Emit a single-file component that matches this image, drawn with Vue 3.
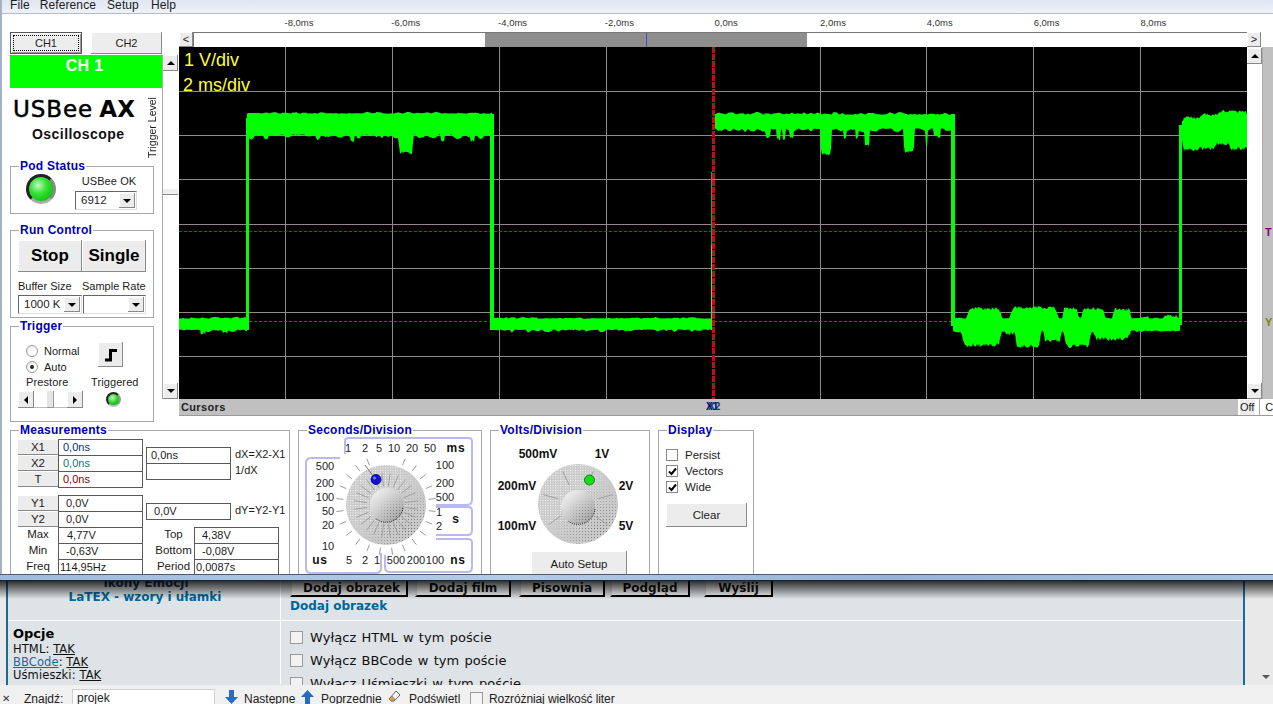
<script setup>
function rngFrom(seed) {
  let a = seed
  return () => {
    a = (a + 0x6d2b79f5) | 0
    let t = Math.imul(a ^ (a >>> 15), 1 | a)
    t = (t + Math.imul(t ^ (t >>> 7), 61 | t)) ^ t
    return ((t ^ (t >>> 14)) >>> 0) / 4294967296
  }
}
const rnd = rngFrom(6912)
function edge(n, amp, minW, maxW) {
  const out = []
  while (out.length < n) {
    const w = minW + Math.floor(rnd() * (maxW - minW + 1))
    const v = rnd() * amp
    for (let i = 0; i < w; i++) out.push(v * Math.sin((Math.PI * (i + 0.5)) / w) + rnd() * 0.9)
  }
  return out
}
const shape = (x, a, b) => Math.min(1, 3 * Math.sin((Math.PI * (x - a)) / (b - a)))
function band(x0, x1, top, bot, ampT, ampB, dips = [], rises = []) {
  const n = x1 - x0
  const t = edge(n + 1, ampT, 5, 13)
  const b = edge(n + 1, ampB, 5, 13)
  const up = []
  const dn = []
  for (let i = 0; i <= n; i++) {
    const x = x0 + i
    let ty = top - t[i]
    let by = bot + b[i]
    for (const d of dips) if (x >= d[0] && x <= d[1]) by = Math.max(by, bot + (d[2] - bot) * shape(x, d[0], d[1]) - rnd() * 4)
    for (const d of rises) if (x >= d[0] && x <= d[1]) ty = Math.min(ty, top - (top - d[2]) * shape(x, d[0], d[1]) + rnd() * 3)
    up.push(`${x},${ty.toFixed(1)}`)
    dn.unshift(`${x},${by.toFixed(1)}`)
  }
  return 'M' + up.join('L') + 'L' + dn.join('L') + 'Z'
}
const wave = [
  band(179, 247, 319, 329, 2.5, 3, [[200, 206, 336], [222, 229, 334]]),
  band(247, 492, 114, 134, 1.5, 6, [[398, 414, 155], [350, 355, 143], [440, 445, 143], [470, 475, 143]]),
  band(492, 711, 319, 329, 1.5, 3),
  band(715, 953, 115, 128, 2.5, 4,
    [[765, 771, 139], [776, 781, 140], [782, 786, 141], [789, 794, 139], [820, 832, 157], [843, 847, 139], [855, 859, 140], [864, 870, 147], [903, 915, 154], [925, 928, 149], [933, 941, 138]]),
  band(953, 1180, 319, 330, 1, 2,
    [[960, 1003, 347], [1004, 1016, 335], [1014, 1042, 348], [1043, 1062, 343], [1063, 1092, 348], [1092, 1132, 341]],
    [[966, 1003, 307], [1008, 1060, 306], [1062, 1079, 307], [1081, 1106, 307], [1112, 1132, 308], [1140, 1150, 316], [1163, 1178, 314]]),
  band(1182, 1247, 121, 139, 1.5, 2,
    [[1182, 1201, 152], [1196, 1216, 150], [1212, 1232, 146], [1228, 1249, 151]],
    [[1182, 1206, 116], [1198, 1226, 113], [1215, 1250, 110]])
]
const vGrid = [285, 392, 499, 606, 820, 926, 1033, 1140]
const hGrid = [91, 135, 179, 224, 268, 312, 356]
const timeLabels = ['-8,0ms', '-6,0ms', '-4,0ms', '-2,0ms', '0,0ns', '2,0ms', '4,0ms', '6,0ms', '8,0ms']

function ticks(cx, cy, angles, r1, r2) {
  return angles.map((a) => {
    const r = (a * Math.PI) / 180
    return {
      x1: cx + Math.sin(r) * r1,
      y1: cy - Math.cos(r) * r1,
      x2: cx + Math.sin(r) * r2,
      y2: cy - Math.cos(r) * r2
    }
  })
}
const secAngles = []
for (let a = -172.5; a < 180; a += 15) secAngles.push(a)
const secOuter = ticks(386, 505, secAngles.filter((a) => Math.abs(a) > 8), 43, 50)
const secInner = ticks(386, 505, secAngles, 19, 32)
const voltAngles = [-125, -75, -25, 25, 75, 125]
const voltInner = ticks(578, 504, voltAngles, 21, 36)
const secLabels = [
  ['1', 348, 452], ['2', 365, 452], ['5', 379, 452], ['10', 394, 452], ['20', 412, 452], ['50', 430, 452],
  ['100', 445, 469], ['200', 445, 487], ['500', 445, 501], ['1', 439, 516], ['2', 439, 530],
  ['500', 325, 470], ['200', 325, 487], ['100', 325, 501], ['50', 328, 515], ['20', 328, 529], ['10', 328, 550],
  ['5', 349, 564], ['2', 365, 564], ['1', 377, 564], ['500', 396, 564], ['200', 416, 564], ['100', 435, 564]
]
const voltLabels = [
  ['500mV', 538, 458], ['1V', 602, 458], ['200mV', 517, 490], ['2V', 626, 490], ['100mV', 517, 530], ['5V', 626, 530]
]
</script>

<template>
  <div class="screen">
    <div class="app">
      <nav class="menu">
        <span class="m-file">File</span><span class="m-ref">Reference</span><span class="m-setup">Setup</span><span class="m-help">Help</span>
      </nav>
      <div class="upper">
        <aside class="left">
          <div class="tabs">
            <button class="tab active"><span>CH1</span></button>
            <button class="tab">CH2</button>
          </div>
          <div class="banner">CH 1</div>
          <div class="brand">
            <div class="logo"><span class="logo-a">USBee</span> <span class="logo-b">AX</span></div>
            <div class="sub">Oscilloscope</div>
            <div class="trig-level">Trigger Level</div>
          </div>
          <fieldset class="group pod">
            <legend>Pod Status</legend>
            <div class="pod-in">
              <div class="led-big"></div>
              <div class="pod-right">
                <div class="lbl">USBee OK</div>
                <div class="select sel-pod"><span>6912</span><i class="drop"><b></b></i></div>
              </div>
            </div>
          </fieldset>
          <fieldset class="group run">
            <legend>Run Control</legend>
            <div class="run-btns"><button class="big">Stop</button><button class="big">Single</button></div>
            <div class="run-labels"><span>Buffer Size</span><span>Sample Rate</span></div>
            <div class="run-sels">
              <div class="select sel-a"><span>1000 K</span><i class="drop"><b></b></i></div>
              <div class="select sel-b"><span></span><i class="drop"><b></b></i></div>
            </div>
          </fieldset>
          <fieldset class="group trig">
            <legend>Trigger</legend>
            <div class="trig-top">
              <div class="radios">
                <label class="radio-row"><i class="radio"></i>Normal</label>
                <label class="radio-row"><i class="radio on"></i>Auto</label>
              </div>
              <button class="edge">
                <svg width="14" height="14" viewBox="0 0 14 14"><path d="M1 12H6.5V2.5H13" fill="none" stroke="#000" stroke-width="3" /></svg>
              </button>
            </div>
            <div class="trig-labels"><span>Prestore</span><span>Triggered</span></div>
            <div class="trig-bot">
              <div class="hscroll">
                <i class="sb-btn"><b class="arr-l"></b></i><i class="sb-track"></i><i class="sb-thumb"></i><i class="sb-track"></i><i class="sb-btn"><b class="arr-r"></b></i>
              </div>
              <div class="led-small"></div>
            </div>
          </fieldset>
        </aside>
        <div class="vslider">
          <i class="vbtn"><b class="arr-u"></b></i>
          <i class="vthumb"></i>
          <i class="vbtn vend"><b class="arr-d"></b></i>
        </div>
        <section class="scope">
          <div class="axis"><span v-for="t in timeLabels" :key="t">{{ t }}</span></div>
          <div class="hbar">
            <i class="hbtn">&lt;</i>
            <div class="htrack"><div class="hthumb"><i></i></div></div>
            <i class="hbtn">&gt;</i>
          </div>
          <div class="scope-row">
            <svg class="plot" width="1068" height="352" viewBox="179 47 1068 352">
              <rect x="179" y="47" width="1068" height="352" fill="#000" />
              <g stroke="#8c8c8c" stroke-width="1" shape-rendering="crispEdges">
                <line v-for="x in vGrid" :key="x" :x1="x + 0.5" :x2="x + 0.5" y1="47" y2="399" />
                <line v-for="y in hGrid" :key="y" x1="179" x2="1247" :y1="y + 0.5" :y2="y + 0.5" />
              </g>
              <line x1="179" x2="1247" y1="231.5" y2="231.5" stroke="#b02020" stroke-dasharray="3 2" shape-rendering="crispEdges" />
              <line x1="179" x2="1247" y1="321.5" y2="321.5" stroke="#1f7a1f" stroke-dasharray="3 2" shape-rendering="crispEdges" />
              <line x1="711.5" x2="711.5" y1="172" y2="245" stroke="#2f9f2f" shape-rendering="crispEdges" />
              <line x1="711.5" x2="711.5" y1="245" y2="330" stroke="#40e040" shape-rendering="crispEdges" />
              <g fill="#00ff00">
                <path v-for="(d, i) in wave" :key="i" :d="d" />
                <rect x="246" y="118" width="3" height="212" />
                <path d="M247 130L248 113H252V130Z" />
                <rect x="490" y="114" width="4" height="216" />
                <rect x="951" y="114" width="4" height="212" />
                <rect x="1179" y="125" width="3" height="200" />
              </g>
              <line x1="713.5" x2="713.5" y1="47" y2="399" stroke="#b81414" stroke-width="3" stroke-dasharray="6 1" shape-rendering="crispEdges" />
              <text x="184" y="66" class="div-txt">1 V/div</text>
              <text x="183" y="91" class="div-txt">2 ms/div</text>
            </svg>
            <div class="vslider2">
              <i class="vbtn"><b class="arr-u"></b></i>
              <i class="vbtn vend"><b class="arr-d"></b></i>
            </div>
            <div class="markers"><b class="mk-t">T</b><b class="mk-y">Y</b></div>
          </div>
          <div class="cursor-row">
            <div class="cursors">Cursors<span class="x-mark"><em>X1</em><em class="x2">X2</em></span></div>
            <button class="off">Off</button>
            <div class="c-cell">C</div>
          </div>
        </section>
      </div>
      <div class="lower">
        <fieldset class="group meas">
          <legend>Measurements</legend>
          <div class="m-block">
            <div class="m-table">
              <button class="m-btn">X1</button><div class="val pad4 c-x1">0,0ns</div>
              <button class="m-btn">X2</button><div class="val pad4 c-x2">0,0ns</div>
              <button class="m-btn">T</button><div class="val pad4 c-t">0,0ns</div>
            </div>
            <div class="m-side side8">
              <div class="val pad4">0,0ns</div><span class="side-lbl">dX=X2-X1</span>
              <div class="val"></div><span class="side-lbl">1/dX</span>
            </div>
          </div>
          <div class="m-block gap8">
            <div class="m-table">
              <button class="m-btn">Y1</button><div class="val pad7">0,0V</div>
              <button class="m-btn">Y2</button><div class="val pad7">0,0V</div>
            </div>
            <div class="m-side side8">
              <div class="val pad7">0,0V</div><span class="side-lbl">dY=Y2-Y1</span>
            </div>
          </div>
          <div class="m-block">
            <div class="m-table">
              <span class="m-lbl">Max</span><div class="val pad8">4,77V</div>
              <span class="m-lbl">Min</span><div class="val pad7">-0,63V</div>
              <span class="m-lbl">Freq</span><div class="val pad1">114,95Hz</div>
            </div>
            <div class="m-table tbl2">
              <span class="m-lbl">Top</span><div class="val pad7">4,38V</div>
              <span class="m-lbl">Bottom</span><div class="val pad7">-0,08V</div>
              <span class="m-lbl">Period</span><div class="val pad1">0,0087s</div>
            </div>
          </div>
        </fieldset>
        <fieldset class="group secs">
          <legend>Seconds/Division</legend>
          <svg width="182" height="138" viewBox="299 437 182 138" class="dial-svg">
            <defs>
              <pattern id="dotW" width="2.5" height="2.5" patternUnits="userSpaceOnUse"><rect width="1" height="1" fill="#fff" /></pattern>
              <pattern id="dotD" width="3" height="3" patternUnits="userSpaceOnUse"><rect width="1" height="1" fill="#6a6a6a" /></pattern>
              <radialGradient id="fadeW" cx="0.22" cy="0.22" r="0.75"><stop offset="0" stop-color="#fff" /><stop offset="0.55" stop-color="#fff" /><stop offset="1" stop-color="#000" /></radialGradient>
              <radialGradient id="fadeD" cx="0.8" cy="0.85" r="0.65"><stop offset="0" stop-color="#fff" /><stop offset="1" stop-color="#000" /></radialGradient>
              <mask id="maskW" maskContentUnits="objectBoundingBox"><rect width="1" height="1" fill="url(#fadeW)" /></mask>
              <mask id="maskD" maskContentUnits="objectBoundingBox"><rect width="1" height="1" fill="url(#fadeD)" /></mask>
              <linearGradient id="knob" x1="0.15" y1="0.1" x2="0.85" y2="0.9"><stop offset="0" stop-color="#eeeeee" /><stop offset="1" stop-color="#a8a8a8" /></linearGradient>
            </defs>
            <g fill="none" stroke="#b9b9ee" stroke-width="2">
              <path d="M345 454V441Q345 438 349 438H468Q472 438 472 441V500Q472 505 466 505H436" />
              <path d="M436 507H468Q472 507 472 511V530Q472 535 468 535H436" />
              <path d="M436 539H468Q472 539 472 543V567Q472 572 468 572H390Q385 572 385 567V555" />
              <path d="M340 458H311Q306 458 306 463V568Q306 573 311 573H376Q381 573 381 568V553" />
            </g>
            <g stroke="#9a9a9a" stroke-width="1"><line v-for="(t, i) in secOuter" :key="i" v-bind="t" /></g>
            <circle cx="386" cy="505" r="40" fill="#c9c9c9" />
            <circle cx="386" cy="505" r="40" fill="url(#dotW)" mask="url(#maskW)" />
            <circle cx="386" cy="505" r="40" fill="url(#dotD)" mask="url(#maskD)" />
            <g stroke="#a0a0a0" stroke-width="1"><line v-for="(t, i) in secInner" :key="i" v-bind="t" /></g>
            <circle cx="387" cy="505" r="17" fill="url(#knob)" />
            <circle cx="387" cy="505" r="17" fill="url(#dotD)" mask="url(#maskD)" />
            <path d="M403 508A17 17 0 0 1 375 518" fill="none" stroke="#111" stroke-width="1" stroke-dasharray="1 1" />
            <line x1="365" y1="465" x2="376" y2="480" stroke="#777" />
            <circle cx="376" cy="479.5" r="5" fill="#1010d8" stroke="#00006a" stroke-width="0.8" />
            <circle cx="374.5" cy="478" r="1.5" fill="#7a7aff" />
            <text v-for="(l, i) in secLabels" :key="i" :x="l[1]" :y="l[2]" class="dial-t" text-anchor="middle">{{ l[0] }}</text>
            <text x="456" y="452" class="unit" text-anchor="middle">ms</text>
            <text x="456" y="523" class="unit" text-anchor="middle">s</text>
            <text x="320" y="564" class="unit" text-anchor="middle">us</text>
            <text x="458" y="564" class="unit" text-anchor="middle">ns</text>
          </svg>
        </fieldset>
        <fieldset class="group volts">
          <legend>Volts/Division</legend>
          <svg width="158" height="112" viewBox="491 437 158 112" class="dial-svg">
            <circle cx="578" cy="504" r="40" fill="#c9c9c9" />
            <circle cx="578" cy="504" r="40" fill="url(#dotW)" mask="url(#maskW)" />
            <circle cx="578" cy="504" r="40" fill="url(#dotD)" mask="url(#maskD)" />
            <g stroke="#a0a0a0" stroke-width="1"><line v-for="(t, i) in voltInner" :key="i" v-bind="t" /></g>
            <circle cx="578" cy="507" r="17" fill="url(#knob)" />
            <circle cx="578" cy="507" r="17" fill="url(#dotD)" mask="url(#maskD)" />
            <path d="M595 509A17 17 0 0 1 568 521" fill="none" stroke="#111" stroke-width="1" stroke-dasharray="1 1" />
            <circle cx="589.5" cy="480" r="5" fill="#10e010" stroke="#0a6a0a" stroke-width="0.8" />
            <text v-for="(l, i) in voltLabels" :key="i" :x="l[1]" :y="l[2]" class="volt-t" text-anchor="middle">{{ l[0] }}</text>
          </svg>
          <button class="auto">Auto Setup</button>
        </fieldset>
        <fieldset class="group disp">
          <legend>Display</legend>
          <label class="chk-row"><i class="chk"></i>Persist</label>
          <label class="chk-row"><i class="chk"><svg width="9" height="9" viewBox="0 0 9 9"><path d="M1 4.5L3.5 7L8 1.5" fill="none" stroke="#000" stroke-width="2" /></svg></i>Vectors</label>
          <label class="chk-row"><i class="chk"><svg width="9" height="9" viewBox="0 0 9 9"><path d="M1 4.5L3.5 7L8 1.5" fill="none" stroke="#000" stroke-width="2" /></svg></i>Wide</label>
          <button class="clear">Clear</button>
        </fieldset>
      </div>
    </div>
    <div class="strip"></div>
    <div class="page">
      <div class="page-shadow"></div>
      <div class="sidebar"></div>
      <div class="content">
        <div class="row row-1">
          <div class="cell-l">
            <div class="emo">Ikony Emocji</div>
            <div class="latex">LaTEX - wzory i ułamki</div>
          </div>
          <div class="cell-r">
            <div class="btns">
              <button class="web w1">Dodaj obrazek</button>
              <button class="web w2">Dodaj film</button>
              <button class="web w3">Pisownia</button>
              <button class="web w4">Podgląd</button>
              <button class="web w5">Wyślij</button>
            </div>
            <div class="add-link">Dodaj obrazek</div>
          </div>
        </div>
        <div class="row row-2">
          <div class="cell-l opts">
            <div class="opt-h">Opcje</div>
            <div class="opt-l">HTML: <u>TAK</u></div>
            <div class="opt-l"><u class="bb">BBCode</u>: <u>TAK</u></div>
            <div class="opt-l">Uśmieszki: <u>TAK</u></div>
          </div>
          <div class="cell-r checks">
            <label class="web-chk"><i></i>Wyłącz HTML w tym poście</label>
            <label class="web-chk"><i></i>Wyłącz BBCode w tym poście</label>
            <label class="web-chk"><i></i>Wyłącz Uśmieszki w tym poście</label>
          </div>
        </div>
      </div>
      <div class="pagebar"><b class="pg-arrow"></b></div>
    </div>
    <div class="find">
      <span class="close">✕</span>
      <span class="f-znajdz">Znajdź:</span>
      <div class="f-input">projek</div>
      <svg class="f-arrow" width="13" height="14" viewBox="0 0 13 14"><path d="M4 0H9V7H13L6.5 14L0 7H4Z" fill="#2a6cc4" /></svg>
      <span class="f-next">Następne</span>
      <svg class="f-arrow" width="13" height="14" viewBox="0 0 13 14"><path d="M4 14H9V7H13L6.5 0L0 7H4Z" fill="#2a6cc4" /></svg>
      <span class="f-prev">Poprzednie</span>
      <svg class="f-erase" width="13" height="13" viewBox="0 0 13 13"><path d="M8 1L12 5L6 11H3L1 9Z" fill="#f4f4f4" stroke="#666" /><path d="M1 9L4 6L7 9.5L5 11H3Z" fill="#e0a040" stroke="#666" stroke-width="0.6" /></svg>
      <span class="f-high">Podświetl</span>
      <i class="f-chk"></i>
      <span class="f-case">Rozróżniaj wielkość liter</span>
    </div>
  </div>
</template>

<style>
html, body { margin: 0; padding: 0; background: #fff; overflow: hidden; }
</style>

<style scoped>
* { box-sizing: border-box; }
i, em { font-style: normal; display: block; }
button { font-family: inherit; color: inherit; margin: 0; padding: 0; cursor: default; }
.screen {
  width: 1273px; height: 704px; overflow: hidden; display: flex; flex-direction: column;
  font-family: "Liberation Sans", Arial, sans-serif; font-size: 11px; color: #1c1c1c;
}
.app { height: 574px; flex: none; overflow: hidden; background: #fff; border-left: 2px solid #a4b2c8; }
.menu {
  height: 14px; display: flex; align-items: flex-end; background: linear-gradient(#dfe6f2, #eef1f8);
  border-bottom: 1px solid #b8bcc8; font-size: 12px; line-height: 14px; overflow: hidden; padding-bottom: 1px; letter-spacing: .1px;
}
.m-file { margin-left: 8px; }
.m-ref { margin-left: 10px; }
.m-setup { margin-left: 11px; }
.m-help { margin-left: 12px; }
.upper { display: flex; height: 409px; }
.left { width: 152px; margin-left: 8px; flex: none; padding-top: 18px; }
.tabs { display: flex; justify-content: space-between; height: 23px; }
.tab {
  width: 71px; height: 22px; background: #ededed; border: 0; font-size: 11px;
  box-shadow: inset -1px -1px 0 #8a8a8a, inset 1px 1px 0 #fff;
}
.tab.active { width: 72px; border: 1px solid #555; box-shadow: inset 1px 1px 0 #fff, inset -1px -1px 0 #999; padding: 2px; }
.tab.active span { display: block; height: 100%; line-height: 15px; border: 1px dotted #000; }
.banner {
  height: 33px; background: #00ff00; color: #fff; font-size: 16px; font-weight: 700; text-align: center;
  line-height: 21px; padding-right: 3px; letter-spacing: .3px;
}
.brand { position: relative; height: 71px; }
.logo { padding: 8px 0 0 3px; font-family: "DejaVu Sans", sans-serif; font-size: 23px; line-height: 27px; white-space: nowrap; color: #000; }
.logo-a { letter-spacing: .9px; -webkit-text-stroke: .5px #000; }
.logo-b { font-weight: 700; margin-left: -1px; }
.sub { font-weight: 700; font-size: 14px; letter-spacing: .45px; padding-left: 22px; margin-top: 3px; line-height: 17px; color: #111; }
.trig-level {
  position: absolute; left: 134px; top: 9px; height: 62px; writing-mode: vertical-rl; transform: rotate(180deg);
  font-size: 10.5px; line-height: 16px; text-align: center; white-space: nowrap;
}
.group {
  margin: 0; padding: 0; width: 144px; border: 1px solid #a8a8a8; min-width: 0; display: block;
}
.group legend {
  margin-left: 8px; padding: 0 1px; color: #0000b8; font-weight: 700; font-size: 12px; line-height: 14px; letter-spacing: .25px;
}
.pod { height: 55px; }
.pod-in { display: flex; padding: 1px 0 0 15px; }
.led-big {
  width: 30px; height: 30px; border-radius: 50%; flex: none;
  background: radial-gradient(circle at 38% 35%, #c8f5c8 0, #35e435 38%, #18c018 75%, #0b8a0b 100%);
  border: 3px solid; border-color: #222 #888 #aaa #222;
}
.pod-right { margin-left: 19px; }
.lbl { text-align: center; line-height: 13px; margin: 1px 0 3px; width: 62px; letter-spacing: .1px; padding-left: 6px; }
.select { display: flex; height: 19px; border: 1px solid; border-color: #666 #ddd #ddd #666; background: #fff; font-size: 11.5px; line-height: 17px; }
.select span { flex: 1; padding-left: 5px; white-space: nowrap; overflow: hidden; }
.drop { width: 16px; flex: none; margin: 1px; background: #ececec; box-shadow: inset -1px -1px 0 #888, inset 1px 1px 0 #fff; display: flex; align-items: center; justify-content: center; }
.drop b, .arr-d { display: block; width: 0; height: 0; border: 4px solid transparent; border-top-color: #000; border-bottom: 0; }
.sel-pod { width: 62px; }
.run { height: 95px; margin-top: 9px; }
.run-btns { display: flex; padding: 3px 0 0 7px; }
.big {
  width: 64px; height: 32px; background: #ececec; border: 0; font-weight: 700; font-size: 17px;
  box-shadow: inset -1px -1px 0 #8a8a8a, inset 1px 1px 0 #fff; color: #000;
}
.run-labels { display: flex; padding: 8px 0 0 7px; line-height: 13px; }
.run-labels span:first-child { width: 64px; }
.run-sels { display: flex; padding: 2px 0 0 7px; }
.sel-a { width: 64px; } .sel-a span { padding-left: 5px; }
.sel-b { width: 63px; margin-left: 1px; }
.trig { height: 103px; margin-top: 1px; }
.trig-top { display: flex; padding: 9px 0 0 15px; }
.radios { width: 72px; padding-top: 1px; }
.radio-row { display: flex; align-items: center; height: 16px; gap: 6px; }
.radio {
  width: 12px; height: 12px; border-radius: 50%; background: radial-gradient(circle at 65% 65%, #fff 40%, #ddd);
  border: 1px solid #9a9a9a; position: relative;
}
.radio.on::after { content: ""; position: absolute; left: 3px; top: 3px; width: 4px; height: 4px; background: #222; border-radius: 50%; }
.edge { width: 25px; height: 25px; background: #ececec; border: 0; box-shadow: inset -1px -1px 0 #8a8a8a, inset 1px 1px 0 #fff; display: flex; align-items: center; justify-content: center; }
.trig-labels { display: flex; padding: 1px 0 0 15px; line-height: 13px; letter-spacing: .1px; }
.trig-labels span:first-child { width: 65px; }
.trig-bot { display: flex; padding: 2px 0 0 7px; align-items: center; }
.hscroll { display: flex; width: 65px; height: 17px; }
.sb-btn { width: 16px; background: #ececec; box-shadow: inset -1px -1px 0 #888, inset 1px 1px 0 #fff; display: flex; align-items: center; justify-content: center; }
.sb-track { width: 13px; background: #fff; border-bottom: 1px solid #bbb; }
.sb-thumb { width: 7px; background: #e4e4e4; box-shadow: inset -1px -1px 0 #999; }
.arr-l { display: block; border: 4px solid transparent; border-right-color: #000; border-left: 0; }
.arr-r { display: block; border: 4px solid transparent; border-left-color: #000; border-right: 0; }
.arr-u { display: block; border: 4px solid transparent; border-bottom-color: #000; border-top: 0; }
.led-small {
  width: 15px; height: 15px; margin-left: 23px; border-radius: 50%; border: 2px solid; border-color: #222 #999 #bbb #222;
  background: radial-gradient(circle at 40% 35%, #c6f5c6, #25d825 50%, #0e9a0e);
}
.vslider { width: 16px; flex: none; display: flex; flex-direction: column; margin-top: 41px; height: 344px; border-left: 1px solid #aaa; }
.vbtn { height: 16px; flex: none; background: #ececec; box-shadow: inset -1px -1px 0 #888, inset 1px 1px 0 #fff; display: flex; align-items: center; justify-content: center; }
.vthumb { height: 7px; flex: none; margin-top: 117px; background: #eee; box-shadow: inset 0 -1px 0 #888, inset 0 1px 0 #fff; }
.vend { margin-top: auto; }
.scope { flex: 1; min-width: 0; margin-left: 1px; }
.axis { height: 18px; display: flex; padding: 3px 0 0 66.6px; font-size: 9.5px; line-height: 11px; color: #333; }
.axis span { width: 106.8px; flex: none; text-align: center; }
.hbar { display: flex; height: 15px; }
.hbtn { width: 14px; flex: none; background: #ececec; box-shadow: inset -1px -1px 0 #888, inset 1px 1px 0 #fff; font-size: 11px; line-height: 14px; text-align: center; }
.htrack { width: 1054px; flex: none; background: #fff; border-top: 1px solid #777; border-left: 1px solid #777; }
.hthumb { width: 322px; height: 14px; margin-left: 291px; background: #8e8e8e; display: flex; justify-content: center; }
.hthumb i { width: 1px; height: 14px; background: #3a55b0; }
.scope-row { display: flex; height: 352px; }
.plot { display: block; flex: none; }
.div-txt { fill: #ffff33; font-size: 18px; font-family: "Liberation Sans", Arial, sans-serif; }
.vslider2 { width: 15px; flex: none; display: flex; flex-direction: column; background: #fff; padding-top: 1px; }
.markers { flex: 1; background: #c0c0c0; border-left: 1px solid #aaa; display: flex; flex-direction: column; padding-left: 2px; font-size: 11px; line-height: 12px; }
.mk-t { color: #800080; margin-top: 179px; }
.mk-y { color: #808000; margin-top: 78px; }
.cursor-row { display: flex; height: 17px; border-bottom: 1px solid #999; }
.cursors { position: relative; width: 1059px; flex: none; background: #c0c0c0; font-weight: 700; font-size: 11px; line-height: 16px; padding-left: 2px; letter-spacing: .35px; color: #222; }
.x-mark { position: absolute; left: 527px; top: 0; width: 14px; height: 16px; color: #000080; letter-spacing: 0; font-size: 10px; }
.x-mark em { position: absolute; left: 0; top: 0; }
.x-mark .x2 { left: 2px; color: #0a3d6a; }
.off { width: 19px; height: 16px; margin-left: 1px; background: #ececec; border: 0; font-size: 11px; line-height: 16px; box-shadow: inset 1px 1px 0 #fff; }
.c-cell { width: 15px; margin-left: 4px; border-left: 1px solid #aaa; padding-left: 5px; line-height: 16px; font-size: 11px; overflow: hidden; }
.lower { display: flex; gap: 8px; margin-left: 8px; }
.lower .group { height: 160px; flex: none; }
.lower .group svg.dial-svg { overflow: visible; }
.meas { width: 280px !important; padding-top: 2px; }
.m-block { display: flex; padding-left: 7px; }
.gap8 { margin-top: 8px; }
.m-table { display: grid; grid-template-columns: 40px 85px; grid-auto-rows: 16px; width: 125px; flex: none; }
.tbl2 { margin-left: 10px; grid-template-columns: 41px 85px; width: 126px; }
.m-btn { background: #ececec; border: 0; box-shadow: inset 0 -1px 0 #888, inset 0 1px 0 #fff; font-size: 11.5px; line-height: 16px; }
.val { border: 1px solid #5a5a5a; margin-bottom: -1px; height: 17px; background: #fff; font-size: 11px; line-height: 15px; white-space: nowrap; overflow: hidden; }
.pad1 { padding-left: 1px; } .pad4 { padding-left: 4px; } .pad7 { padding-left: 7px; } .pad8 { padding-left: 8px; }
.c-x1 { color: #0a2a80; } .c-x2 { color: #0a7a7a; } .c-t { color: #800000; }
.m-side { display: grid; grid-template-columns: 85px auto; grid-auto-rows: 16px; margin-left: 3px; }
.side8 { margin-top: 8px; align-self: flex-start; }
.side-lbl { padding-left: 4px; line-height: 15px; font-size: 11px; white-space: nowrap; }
.m-lbl { text-align: center; line-height: 15px; font-size: 11.5px; white-space: nowrap; }
.secs { width: 184px !important; }
.volts { width: 160px !important; }
.disp { width: 96px !important; }
.dial-svg { display: block; }
.dial-t { font-size: 11px; fill: #1c1c1c; font-family: "Liberation Sans", Arial, sans-serif; }
.unit { font-size: 12px; font-weight: 700; fill: #111; letter-spacing: .8px; font-family: "Liberation Sans", Arial, sans-serif; }
.volt-t { font-size: 12px; font-weight: 700; fill: #111; font-family: "Liberation Sans", Arial, sans-serif; }
.auto { display: block; width: 96px; height: 26px; margin: 2px 0 0 40px; background: #ececec; border: 0; font-size: 11.5px; box-shadow: inset -1px -1px 0 #8a8a8a, inset 1px 1px 0 #fff; }
.chk-row { display: flex; align-items: center; gap: 7px; height: 16px; padding-left: 7px; font-size: 11.5px; }
.chk-row:first-of-type { margin-top: 10px; }
.chk { width: 12px; height: 12px; border: 1px solid #8a8a8a; background: #fff; display: flex; align-items: center; justify-content: center; }
.clear { display: block; width: 81px; height: 24px; margin: 8px 0 0 7px; background: #ececec; border: 0; font-size: 11.5px; box-shadow: inset -1px -1px 0 #8a8a8a, inset 1px 1px 0 #fff; }
.strip { height: 7px; flex: none; background: linear-gradient(90deg, #9dbbe0, #b2cbe8 40%, #94b4da 70%, #a8c4e4); border-top: 1px solid #4a5a70; border-bottom: 1px solid #1a2430; }
.page { position: relative; height: 104px; flex: none; display: flex; background: #e9e9e9; overflow: hidden; font-family: "DejaVu Sans", Verdana, sans-serif; color: #111; }
.page-shadow { position: absolute; left: 0; right: 0; top: 0; height: 18px; background: linear-gradient(rgba(0,0,0,.8), rgba(0,0,0,0)); z-index: 2; }
.sidebar { width: 6px; flex: none; }
.content { width: 1239px; flex: none; border-left: 2px solid #1a6a96; border-right: 2px solid #1a6a96; background: #dee3e7; }
.row { display: flex; }
.row-1 { height: 40px; border-bottom: 1px solid #fff; }
.row-2 { height: 63px; }
.cell-l { width: 273px; flex: none; border-right: 1px solid #fff; }
.emo { font-weight: 700; font-size: 12px; line-height: 14px; text-align: center; color: #123a54; margin-top: -5px; padding-left: 4px; }
.latex { font-weight: 700; font-size: 12px; line-height: 15px; text-align: center; color: #006699; margin-top: 0; padding-left: 2px; }
.cell-r { flex: 1; padding-left: 9px; }
.btns { display: flex; height: 17px; margin-top: -2px; }
.web { height: 18px; background: #fafafa; font-weight: 700; font-size: 12px; line-height: 14px; border: 2px solid; border-color: #eee #000 #000 #ddd; color: #111; }
.w1 { width: 118px; padding-left: 5px; } .w2 { width: 96px; margin-left: 7px; } .w3 { width: 86px; margin-left: 8px; } .w4 { width: 80px; margin-left: 5px; } .w5 { width: 69px; margin-left: 14px; }
.add-link { font-weight: 700; font-size: 12px; color: #006699; line-height: 15px; margin-top: 3px; }
.opts { padding: 5px 0 0 5px; }
.opt-h { font-weight: 700; font-size: 13px; line-height: 16px; color: #000; }
.opt-l { font-size: 11.5px; line-height: 13px; white-space: nowrap; letter-spacing: .1px; }
.opt-h + .opt-l { margin-top: 1px; }
.bb { color: #1a6a96; }
.checks { padding-top: 5px; }
.web-chk { display: flex; align-items: center; gap: 7px; height: 23px; font-size: 13px; white-space: nowrap; letter-spacing: .05px; word-spacing: 1px; }
.web-chk i { width: 13px; height: 13px; background: #f2f2f2; border: 1px solid #9a9a9a; }
.pagebar { flex: 1; position: relative; }
.pg-arrow { position: absolute; right: 3px; top: 94px; border: 4px solid transparent; border-top-color: #555; border-bottom: 0; }
.find { flex: 1; min-height: 0; display: flex; background: #f0f0f0; border-top: 1px solid #a0a0a0; margin-top: -1px; align-items: flex-start; font-size: 12px; color: #222; padding: 7px 0 0 0; line-height: 14px; overflow: hidden; white-space: nowrap; }
.close { width: 12px; font-size: 10px; text-align: center; color: #333; }
.f-znajdz { margin-left: 12px; width: 48px; }
.f-input { width: 143px; height: 30px; margin-top: -3px; background: #fff; border: 1px solid #cfcfcf; padding: 1px 0 0 4px; font-size: 12px; }
.f-arrow { margin-left: 10px; flex: none; margin-top: -2px; }
.f-next { margin-left: 6px; width: 51px; }
.f-arrow + .f-next + .f-arrow { margin-left: 6px; }
.f-prev { margin-left: 7px; width: 59px; }
.f-erase { margin-left: 8px; flex: none; margin-top: -2px; }
.f-high { margin-left: 8px; width: 50px; }
.f-chk { width: 13px; height: 13px; margin: 0 6px 0 11px; border: 1px solid #9a9a9a; background: #f6f6f6; }
.f-case { letter-spacing: -.1px; }
</style>
